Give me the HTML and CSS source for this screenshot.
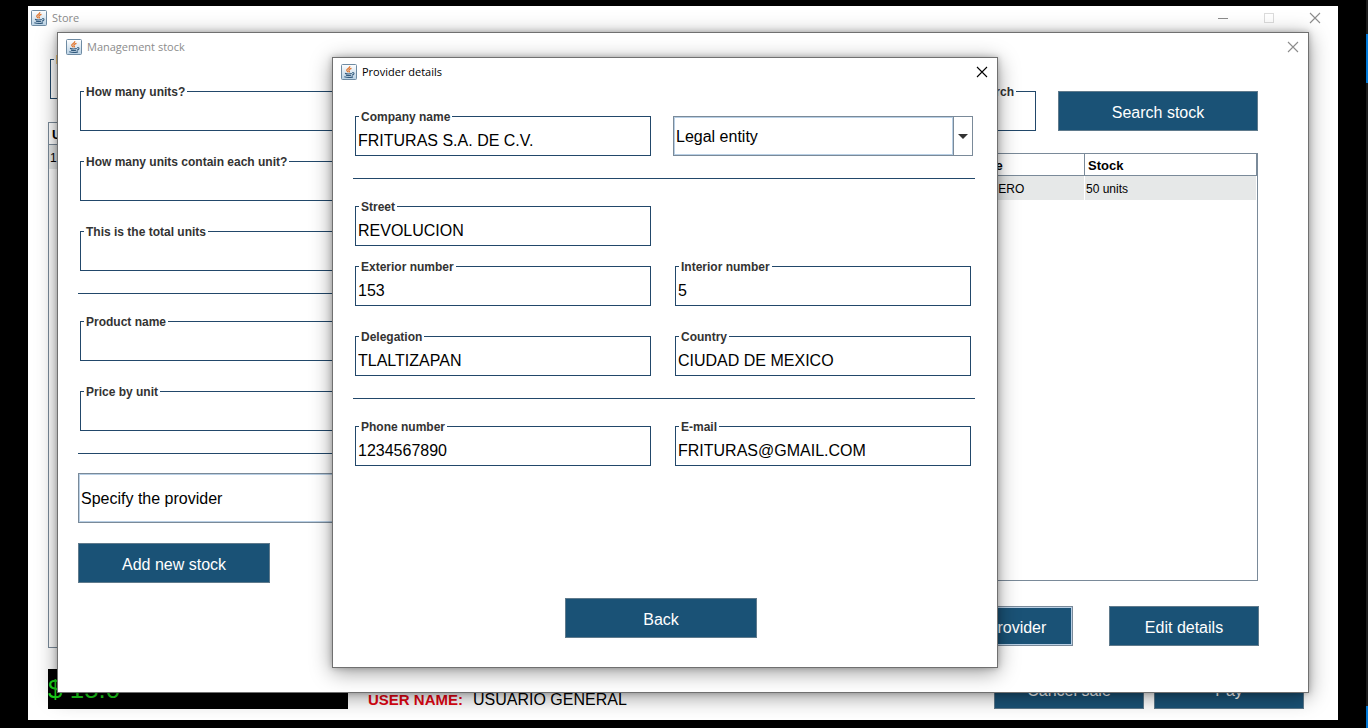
FILE: index.html
```html
<!DOCTYPE html>
<html lang="en">
<head>
<meta charset="utf-8">
<title>Store</title>
<link rel="stylesheet" href="styles.css">
</head>
<body>
<svg class="sprite" aria-hidden="true">
  <symbol id="java" viewBox="0 0 16 16">
    <defs>
      <linearGradient id="cup-bg" x1="0" y1="0" x2="0" y2="1">
        <stop offset="0" stop-color="#fff"/><stop offset="1" stop-color="#b9d1e4"/>
      </linearGradient>
    </defs>
    <rect x=".5" y=".5" width="15" height="15" rx="1" fill="url(#cup-bg)" stroke="#6e8ba3"/>
    <path d="M8.800 2.200C9.400 4.300 5.500 4.700 5.700 6.300C5.800 7.200 7 7.500 7.300 8.300M10.500 4.400C8.500 5 7.200 5.900 8.100 6.900C8.700 7.500 8.500 8 8 8.400" fill="none" stroke="#e0762f" stroke-width="1.200"/>
    <path d="M4 9.400Q7.500 10.400 10.800 9.500M5 11.300Q7.500 12 10.300 11.300M11.200 8.700Q13.500 8.400 12.800 10Q12.200 10.900 11 11.100M3.300 12.800Q7.500 14 12 12.900" fill="none" stroke="#31597c" stroke-width="1.100"/>
  </symbol>
  <symbol id="close" viewBox="0 0 12 12">
    <path d="M1 1L11 11M11 1L1 11" fill="none" stroke="currentColor" stroke-width="1.100"/>
  </symbol>
</svg>

<div class="desktop">
  <div class="screen-edge"><span class="edge-mark edge-mark-upper"></span><span class="edge-mark edge-mark-lower"></span></div>

  <section class="window store" aria-label="Store">
    <header class="titlebar">
      <svg class="app-icon"><use href="#java"/></svg>
      <h1 class="title">Store</h1>
      <button class="control minimize" aria-label="Minimize"><svg class="glyph" viewBox="0 0 12 12"><path d="M1 6.500H11" stroke="currentColor"/></svg></button>
      <button class="control maximize" aria-label="Maximize" disabled><svg class="glyph" viewBox="0 0 12 12"><rect x="1.500" y="1.500" width="9" height="9" fill="none" stroke="currentColor"/></svg></button>
      <button class="control" aria-label="Close"><svg class="glyph"><use href="#close"/></svg></button>
    </header>
    <div class="store-body">
      <fieldset class="field store-field">
        <legend class="store-legend"><label for="barcode">B</label></legend>
        <input id="barcode" type="text">
      </fieldset>
      <div class="table-pane store-pane">
        <table class="grid">
          <thead><tr><th>U</th></tr></thead>
          <tbody><tr><td>1</td></tr></tbody>
        </table>
      </div>
      <footer class="store-footer">
        <output class="total">$ 15.0</output>
        <p class="user"><strong class="user-label">USER NAME:</strong> <span>USUARIO GENERAL</span></p>
        <button class="button">Cancel sale</button>
        <button class="button">Pay</button>
      </footer>
    </div>
  </section>

  <section class="window floating management" aria-label="Management stock">
    <header class="titlebar">
      <svg class="app-icon"><use href="#java"/></svg>
      <h2 class="title">Management stock</h2>
      <button class="control" aria-label="Close"><svg class="glyph"><use href="#close"/></svg></button>
    </header>
    <div class="management-body">
      <form class="stock-form">
        <div class="field-group">
          <fieldset class="field"><legend><label for="units">How many units?</label></legend><input id="units" type="text"></fieldset>
          <fieldset class="field"><legend><label for="contain">How many units contain each unit?</label></legend><input id="contain" type="text"></fieldset>
          <fieldset class="field"><legend><label for="total">This is the total units</label></legend><input id="total" type="text"></fieldset>
        </div>
        <hr class="rule">
        <div class="field-group">
          <fieldset class="field"><legend><label for="product">Product name</label></legend><input id="product" type="text"></fieldset>
          <fieldset class="field"><legend><label for="price">Price by unit</label></legend><input id="price" type="text"></fieldset>
        </div>
        <hr class="rule">
        <div class="combo combo-tall">
          <select aria-label="Provider"><option>Specify the provider</option></select>
          <span class="combo-arrow"><svg width="10" height="6" viewBox="0 0 10 6"><path d="M0 0H10L5 5Z" fill="#333"/></svg></span>
        </div>
        <button class="button button-wide" type="button">Add new stock</button>
      </form>
      <div class="stock-list">
        <div class="search-row">
          <fieldset class="field search-field"><legend><label for="search">Search</label></legend><input id="search" type="text"></fieldset>
          <button class="button search-button">Search stock</button>
        </div>
        <div class="table-pane stock-pane">
          <table class="grid">
            <thead><tr><th>Id</th><th>Product name</th><th>Stock</th></tr></thead>
            <tbody><tr><td>1</td><td>PAPAS RANCHERO</td><td>50 units</td></tr></tbody>
          </table>
        </div>
        <div class="actions">
          <button class="button focused">View provider</button>
          <button class="button">Edit details</button>
        </div>
      </div>
    </div>
  </section>

  <section class="window floating dialog" role="dialog" aria-label="Provider details">
    <header class="titlebar">
      <svg class="app-icon"><use href="#java"/></svg>
      <h2 class="title">Provider details</h2>
      <button class="control" aria-label="Close"><svg class="glyph"><use href="#close"/></svg></button>
    </header>
    <form class="dialog-body">
      <div class="pair">
        <fieldset class="field"><legend><label for="company">Company name</label></legend><input id="company" type="text" value="FRITURAS S.A. DE C.V."></fieldset>
        <div class="combo">
          <select aria-label="Entity type"><option>Legal entity</option></select>
          <span class="combo-arrow"><svg width="10" height="6" viewBox="0 0 10 6"><path d="M0 0H10L5 5Z" fill="#333"/></svg></span>
        </div>
      </div>
      <hr class="rule">
      <div class="pair street">
        <fieldset class="field"><legend><label for="street">Street</label></legend><input id="street" type="text" value="REVOLUCION"></fieldset>
      </div>
      <div class="pair address">
        <fieldset class="field"><legend><label for="exterior">Exterior number</label></legend><input id="exterior" type="text" value="153"></fieldset>
        <fieldset class="field"><legend><label for="interior">Interior number</label></legend><input id="interior" type="text" value="5"></fieldset>
        <fieldset class="field"><legend><label for="delegation">Delegation</label></legend><input id="delegation" type="text" value="TLALTIZAPAN"></fieldset>
        <fieldset class="field"><legend><label for="country">Country</label></legend><input id="country" type="text" value="CIUDAD DE MEXICO"></fieldset>
      </div>
      <hr class="rule">
      <div class="pair">
        <fieldset class="field"><legend><label for="phone">Phone number</label></legend><input id="phone" type="text" value="1234567890"></fieldset>
        <fieldset class="field"><legend><label for="email">E-mail</label></legend><input id="email" type="text" value="FRITURAS@GMAIL.COM"></fieldset>
      </div>
      <div class="dialog-actions"><button class="button button-wide" type="button">Back</button></div>
    </form>
  </section>
</div>
</body>
</html>
```
FILE: styles.css
```css
:root {
  --navy: #1a5276;
  --line: #22486a;
  --metal: #7a8a99;
}

* { box-sizing: border-box; }

body {
  margin: 0;
  background: #000;
  font-family: "Liberation Sans", Arial, sans-serif;
  font-size: 16px;
  color: #000;
}

h1, h2, p { margin: 0; }
input, select, button { font: inherit; color: inherit; border-radius: 0; }

.sprite { position: absolute; width: 0; height: 0; }

.desktop { position: relative; height: 100vh; overflow: hidden; }

/* Strip of the neighbouring display */
.screen-edge { position: absolute; top: 0; right: 0; bottom: 0; width: 2px; background: #1c1c1c; }
.edge-mark { position: absolute; width: 2px; background: #0078d7; }
.edge-mark-upper { top: 34px; height: 49px; }
.edge-mark-lower { bottom: 0; height: 22px; }

/* Windows */
.window { position: absolute; display: flex; flex-direction: column; background: #fff; }
.floating { border: 1px solid #707070; box-shadow: 0 4px 20px rgba(0, 0, 0, 0.4), 0 0 6px rgba(0, 0, 0, 0.25); }
.store { inset: 6px 30px 8px 28px; }
.management { inset: 32px 59px 35px 57px; }
.dialog { inset: 57px 370px 60px 332px; }

.titlebar {
  display: flex;
  flex: none;
  align-items: center;
  height: 28px;
  padding: 0 9px 0 8px;
  color: #8c8c8c;
  font-family: "Open Sans", "Noto Sans", sans-serif;
}
.store .titlebar { height: 24px; padding: 0 17px 0 3px; }
.dialog .titlebar { color: #000; }
.app-icon { width: 16px; height: 16px; margin-right: 5px; }
.title { flex: 1; font-size: 11px; line-height: 16px; font-weight: 400; }
.control { display: flex; padding: 0; border: 0; background: none; }
.glyph { width: 12px; height: 12px; }
.minimize, .maximize { margin-right: 34px; }
.maximize { color: #dcdcdc; }

/* Titled text boxes */
.field {
  min-width: 0;
  margin: 0;
  padding: 0 1px 0 3px;
  border: 1px solid var(--line);
}
.field legend {
  height: 13px;
  padding: 0 2px;
  color: #333;
  font-size: 12px;
  line-height: 15px;
  font-weight: 700;
}
.field input {
  display: block;
  width: 100%;
  height: 32px;
  margin-left: -1px;
  padding: 4px 0 0;
  border: 0;
  background: none;
  outline: 0;
}

.rule { width: 100%; height: 1px; margin: 0; border: 0; background: var(--line); }

.button {
  width: 150px;
  height: 40px;
  padding: 4px 0 0;
  border: 1px solid #5f7a8c;
  background: var(--navy);
  color: #fff;
}
.button-wide { width: 192px; }
.focused { border-color: var(--metal); box-shadow: inset 0 0 0 1px #b8cfe5; }

.combo { display: flex; height: 40px; border: 1px solid var(--metal); }
.combo select {
  flex: 1;
  min-width: 0;
  padding: 0 1px;
  border: 1px solid #b8cfe5;
  background: #fff;
  appearance: none;
  outline: 0;
}
.combo-arrow {
  display: flex;
  align-items: center;
  justify-content: center;
  width: 19px;
  padding-top: 2px;
  border-left: 1px solid var(--metal);
}
.combo-tall { height: 50px; }

/* Tables */
.table-pane { border: 1px solid var(--metal); overflow: hidden; }
.grid { width: 100%; table-layout: fixed; border-collapse: separate; border-spacing: 0; }
.grid th {
  height: 22px;
  padding: 2px 3px 0;
  border-right: 1px solid var(--metal);
  border-bottom: 1px solid var(--metal);
  font-size: 13px;
  line-height: 16px;
  text-align: left;
}
.grid td {
  height: 24px;
  padding: 2px 1px 0;
  border-right: 1px solid #fff;
  background: #e6e8e8;
  font-size: 12px;
  line-height: 16px;
}

/* Store */
.store-body { display: flex; flex: 1; flex-direction: column; padding: 23px 34px 11px 20px; }
.store-field { width: 400px; margin: 0 0 23px 2px; }
.store-field .store-legend { color: #a0402d; }
.store-pane { flex: 1; margin-bottom: 21px; }
.store-footer { display: flex; gap: 10px; height: 40px; }
.total {
  width: 300px;
  height: 40px;
  margin-right: 10px;
  background: #000;
  color: #1ddb1d;
  font-size: 26px;
  line-height: 40px;
}
.user { display: flex; flex: 1; gap: 10px; padding-top: 20px; line-height: 22px; }
.user-label { color: #e30613; font-size: 15px; }

/* Management stock */
.management-body {
  display: grid;
  flex: 1;
  grid-template-columns: 622fr 521fr;
  gap: 38px;
  padding: 24px 49px 46px 20px;
}
.stock-form { display: flex; flex-direction: column; align-items: flex-start; }
.field-group { display: grid; gap: 24px; width: 100%; padding: 0 4px 0 2px; }
.stock-form .rule { margin: 22px 0 21px; }
.stock-form .combo { width: 100%; margin: -2px 0 20px; }
.stock-list { display: flex; flex-direction: column; }
.search-row { display: flex; align-items: flex-end; gap: 22px; padding: 0 1px 0 2px; }
.search-field { flex: 1; }
.search-field legend { margin: 0 18px 0 auto; }
.search-button { width: 200px; }
.stock-pane { flex: 1; margin: 22px 1px 25px 0; }
.stock-pane .grid th:first-child { width: 174px; }
.actions { display: flex; justify-content: flex-end; gap: 36px; }

/* Provider details */
.dialog-body { display: flex; flex: 1; flex-direction: column; padding: 24px 22px 29px 20px; }
.pair {
  display: grid;
  grid-template-columns: 1fr 1fr;
  gap: 24px;
  align-items: end;
  padding: 0 4px 0 2px;
}
.pair .combo { margin: 0 -2px; }
.dialog-body .rule { margin: 22px 0 21px; }
.street { margin-bottom: 14px; }
.dialog-actions { display: flex; justify-content: center; margin-top: auto; padding-right: 6px; }
```
